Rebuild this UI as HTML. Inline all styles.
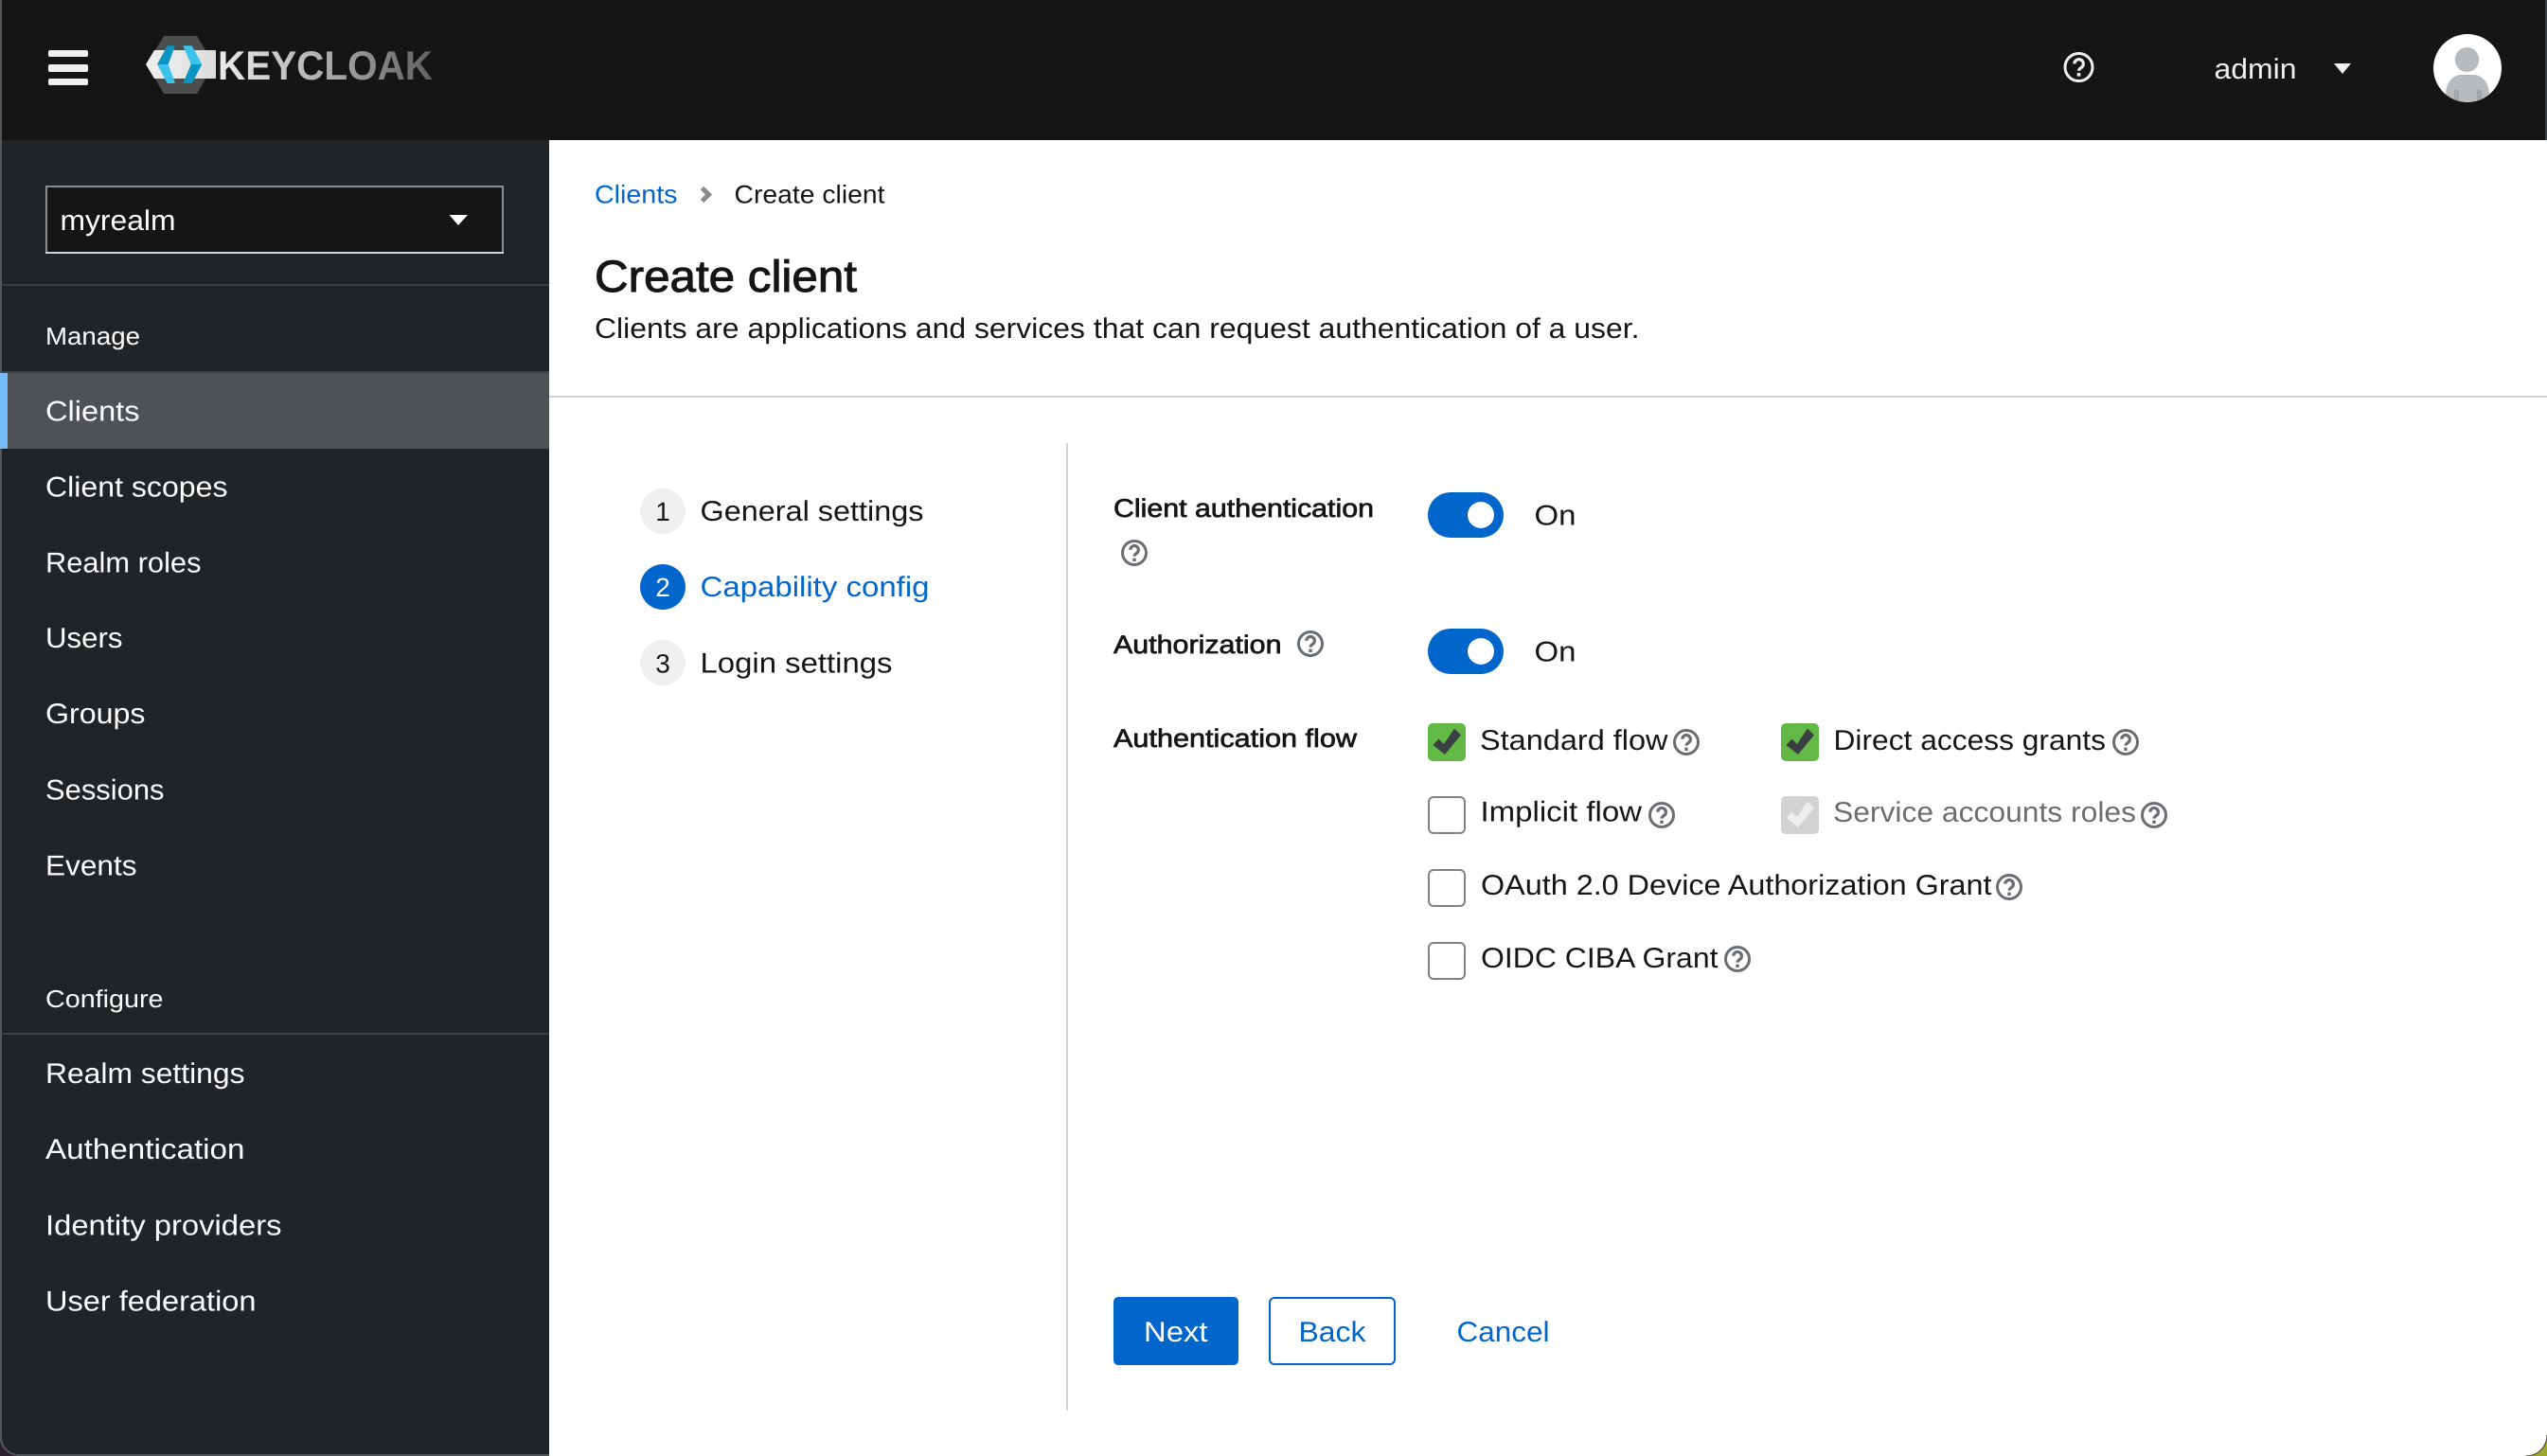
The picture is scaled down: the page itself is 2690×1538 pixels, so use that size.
<!DOCTYPE html>
<html lang="en"><head><meta charset="utf-8"><title>Keycloak - Create client</title>
<style>
html,body{margin:0;padding:0;background:#fff;width:2690px;height:1538px;overflow:hidden}
svg{display:block}
text{font-family:"Liberation Sans",sans-serif;font-size:30px;text-rendering:geometricPrecision}
.s{fill:#fff}.d{fill:#151515}.b{fill:#06c}
.m{stroke:#151515;stroke-width:.7px;fill:#151515;font-size:27px}
</style></head><body>
<svg width="2690" height="1538" viewBox="0 0 2690 1538" xmlns="http://www.w3.org/2000/svg">
<defs>
<linearGradient id="kg" gradientUnits="userSpaceOnUse" x1="230" y1="0" x2="457" y2="0"><stop offset="0" stop-color="#ececec"/><stop offset=".5" stop-color="#adadad"/><stop offset="1" stop-color="#5f5f5f"/></linearGradient>
<linearGradient id="bg" gradientUnits="userSpaceOnUse" x1="154" y1="0" x2="228" y2="0"><stop offset="0" stop-color="#f0f0f0"/><stop offset="1" stop-color="#dcdcdc"/></linearGradient>
<g id="h"><circle r="12.5" fill="none" stroke="#6a6e73" stroke-width="3"/><path d="M-4.2,-3.2a4.3,4.3 0 1 1 6.6,3.6c-1.5,1-2.3,1.6-2.3,3.2" fill="none" stroke="#6a6e73" stroke-width="3.2"/><rect x="-1.7" y="5.6" width="3.4" height="3.4" fill="#6a6e73"/></g>
<g id="u"><rect x="1" y="1" width="38" height="38" rx="5" fill="#fff" stroke="#808285" stroke-width="2"/></g>
<path id="c" d="M5.5,23L11.5,16.5L17,22L28,5.5L35,12.5L18,33Z"/>
<clipPath id="av"><circle cx="2606" cy="72" r="36"/></clipPath>
</defs>

<rect width="2690" height="1538" fill="#fff"/>
<!-- header -->
<rect width="2690" height="148" fill="#151515"/>
<rect x="2688" width="2" height="148" fill="#3c3f42"/>
<!-- sidebar -->
<rect y="148" width="580" height="1390" fill="#212427"/>
<rect width="2" height="1538" fill="#54575a"/>

<!-- hamburger -->
<rect x="51" y="53" width="42" height="7" rx="2" fill="#f0f0f0"/>
<rect x="51" y="68" width="42" height="8" rx="2" fill="#f0f0f0"/>
<rect x="51" y="83" width="42" height="7" rx="2" fill="#f0f0f0"/>

<!-- logo -->
<polygon points="173,38 208,38 226,68 208,99 173,99 155,68" fill="#4d4d4d"/>
<polygon points="163,53 228,53 228,83 163,83 154,68" fill="url(#bg)"/>
<polygon points="166,68 176.7,48.3 185,48.3 177.7,68" fill="#0a94c2"/>
<polygon points="166,68 177.7,68 185,88 176.7,88" fill="#39c4ee"/>
<polygon points="213.3,68 202.7,48.3 193.3,48.3 201.7,68" fill="#39c4ee"/>
<polygon points="213.3,68 201.7,68 193.3,88 202.7,88" fill="#0a94c2"/>
<text x="230" y="84" textLength="227" lengthAdjust="spacingAndGlyphs" style="font-size:43px;font-weight:700" fill="url(#kg)">KEYCLOAK</text>

<!-- header right -->
<g transform="translate(2195.5,71)"><circle r="14.5" fill="none" stroke="#f0f0f0" stroke-width="3"/><path d="M-4.6,-3.6a4.7,4.7 0 1 1 7.2,4c-1.6,1-2.5,1.8-2.5,3.4" fill="none" stroke="#f0f0f0" stroke-width="3.2"/><rect x="-1.8" y="6" width="3.6" height="3.6" fill="#f0f0f0"/></g>
<text x="2338.5" y="83" textLength="87" lengthAdjust="spacingAndGlyphs" fill="#f0f0f0">admin</text>
<polygon points="2465,67 2483,67 2474,78" fill="#f0f0f0"/>
<circle cx="2606" cy="72" r="36" fill="#fff"/>
<g clip-path="url(#av)">
<ellipse cx="2605.5" cy="63" rx="12.8" ry="13" fill="#b8bbbe"/>
<path d="M2599,52a13,13 0 0 0 0,22a13,13 0 0 1 0,-22Z" fill="#a3a5a8"/>
<path d="M2583,110V100c0,-13 8,-21 16,-21h14c8,0 16,8 16,21v10Z" fill="#b8bbbe"/>
<rect x="2592" y="95" width="5" height="15" fill="#a3a5a8"/>
<rect x="2616" y="95" width="5" height="15" fill="#a3a5a8"/>
</g>

<!-- realm selector -->
<rect x="49" y="197" width="482" height="70" fill="#151515" stroke="#8a8d90" stroke-width="2"/>
<rect x="48" y="266" width="484" height="2" fill="#d2d2d2"/>
<text class="s" x="63.5" y="243" textLength="122" lengthAdjust="spacingAndGlyphs">myrealm</text>
<polygon points="474.5,227 494,227 484,238" fill="#fff"/>
<rect x="2" y="300" width="578" height="2" fill="#3c3f42"/>

<!-- nav -->
<text class="s" x="48" y="364" textLength="100" lengthAdjust="spacingAndGlyphs" style="font-size:26px">Manage</text>
<rect x="2" y="392" width="578" height="2" fill="#3c3f42"/>
<rect x="2" y="394" width="578" height="80" fill="#4f5255"/>
<rect x="0" y="394" width="8" height="80" fill="#73bcf7"/>
<text class="s" x="48" y="444.5" textLength="99.5" lengthAdjust="spacingAndGlyphs">Clients</text>
<text class="s" x="48" y="524.5" textLength="192.5" lengthAdjust="spacingAndGlyphs">Client scopes</text>
<text class="s" x="48" y="604.5" textLength="164.5" lengthAdjust="spacingAndGlyphs">Realm roles</text>
<text class="s" x="48" y="684" textLength="81.5" lengthAdjust="spacingAndGlyphs">Users</text>
<text class="s" x="48" y="764" textLength="105.5" lengthAdjust="spacingAndGlyphs">Groups</text>
<text class="s" x="48" y="844.5" textLength="125.5" lengthAdjust="spacingAndGlyphs">Sessions</text>
<text class="s" x="48" y="924.5" textLength="96.5" lengthAdjust="spacingAndGlyphs">Events</text>
<text class="s" x="48" y="1064" textLength="124.5" lengthAdjust="spacingAndGlyphs" style="font-size:26px">Configure</text>
<rect x="2" y="1091" width="578" height="2" fill="#3c3f42"/>
<text class="s" x="48" y="1144" textLength="210.5" lengthAdjust="spacingAndGlyphs">Realm settings</text>
<text class="s" x="48" y="1224" textLength="210.5" lengthAdjust="spacingAndGlyphs">Authentication</text>
<text class="s" x="48" y="1304.5" textLength="249.5" lengthAdjust="spacingAndGlyphs">Identity providers</text>
<text class="s" x="48" y="1384.5" textLength="222.5" lengthAdjust="spacingAndGlyphs">User federation</text>

<!-- breadcrumb + title -->
<text class="b" x="628" y="214.5" textLength="87.5" lengthAdjust="spacingAndGlyphs" style="font-size:27px">Clients</text>
<path d="M741.5,198.5L748.5,205.5L741.5,212.5" fill="none" stroke="#8a8d90" stroke-width="5"/>
<text class="d" x="775.5" y="214.5" textLength="159" lengthAdjust="spacingAndGlyphs" style="font-size:27px">Create client</text>
<text x="628" y="308" textLength="277" lengthAdjust="spacingAndGlyphs" style="font-size:47px;stroke:#151515;stroke-width:1px" fill="#151515">Create client</text>
<text class="d" x="628" y="357" textLength="1103.5" lengthAdjust="spacingAndGlyphs">Clients are applications and services that can request authentication of a user.</text>
<rect x="580" y="418" width="2110" height="2" fill="#d2d2d2"/>
<rect x="1126" y="468" width="2" height="1022" fill="#d2d2d2"/>

<!-- wizard -->
<circle cx="700" cy="540" r="24" fill="#f0f0f0"/>
<text class="d" x="700" y="550" text-anchor="middle" style="font-size:28px">1</text>
<text class="d" x="739.5" y="550" textLength="236" lengthAdjust="spacingAndGlyphs">General settings</text>
<circle cx="700" cy="620" r="24" fill="#06c"/>
<text class="s" x="700" y="630" text-anchor="middle" style="font-size:28px">2</text>
<text class="b" x="739.5" y="630" textLength="242" lengthAdjust="spacingAndGlyphs">Capability config</text>
<circle cx="700" cy="700" r="24" fill="#f0f0f0"/>
<text class="d" x="700" y="710.5" text-anchor="middle" style="font-size:28px">3</text>
<text class="d" x="739.5" y="710.5" textLength="203" lengthAdjust="spacingAndGlyphs">Login settings</text>

<!-- client auth -->
<text class="m" x="1176" y="546" textLength="275" lengthAdjust="spacingAndGlyphs">Client authentication</text>
<use href="#h" x="1198" y="584"/>
<rect x="1508" y="520" width="80" height="48" rx="24" fill="#06c"/>
<circle cx="1564" cy="544" r="14" fill="#fff"/>
<text class="d" x="1620.5" y="554.5" textLength="44" lengthAdjust="spacingAndGlyphs">On</text>

<text class="m" x="1176" y="690" textLength="177.5" lengthAdjust="spacingAndGlyphs">Authorization</text>
<use href="#h" x="1384" y="680"/>
<rect x="1508" y="664" width="80" height="48" rx="24" fill="#06c"/>
<circle cx="1564" cy="688" r="14" fill="#fff"/>
<text class="d" x="1620.5" y="698.5" textLength="44" lengthAdjust="spacingAndGlyphs">On</text>

<text class="m" x="1176" y="789" textLength="257" lengthAdjust="spacingAndGlyphs">Authentication flow</text>

<!-- checks -->
<rect x="1508" y="764" width="40" height="40" rx="5" fill="#63b946"/>
<use href="#c" x="1508" y="764" fill="#3c3f42"/>
<text class="d" x="1563" y="792" textLength="198.5" lengthAdjust="spacingAndGlyphs">Standard flow</text>
<use href="#h" x="1781" y="784"/>

<rect x="1881" y="764" width="40" height="40" rx="5" fill="#63b946"/>
<use href="#c" x="1881" y="764" fill="#3c3f42"/>
<text class="d" x="1936.5" y="792" textLength="287.5" lengthAdjust="spacingAndGlyphs">Direct access grants</text>
<use href="#h" x="2245" y="784"/>

<use href="#u" x="1508" y="841"/>
<text class="d" x="1563.5" y="867.5" textLength="170.5" lengthAdjust="spacingAndGlyphs">Implicit flow</text>
<use href="#h" x="1755" y="861"/>

<rect x="1881" y="841" width="40" height="40" rx="5" fill="#d2d2d2"/>
<use href="#c" x="1881" y="841" fill="#ededed"/>
<text x="1936" y="868" textLength="320" lengthAdjust="spacingAndGlyphs" fill="#6a6e73">Service accounts roles</text>
<use href="#h" x="2275" y="861"/>

<use href="#u" x="1508" y="918"/>
<text class="d" x="1564" y="945" textLength="539.5" lengthAdjust="spacingAndGlyphs">OAuth 2.0 Device Authorization Grant</text>
<use href="#h" x="2122" y="937"/>

<use href="#u" x="1508" y="995"/>
<text class="d" x="1564" y="1022" textLength="250.5" lengthAdjust="spacingAndGlyphs">OIDC CIBA Grant</text>
<use href="#h" x="1835" y="1013"/>

<!-- buttons -->
<rect x="1176" y="1370" width="132" height="72" rx="5" fill="#06c"/>
<text class="s" x="1208" y="1417" textLength="67.5" lengthAdjust="spacingAndGlyphs">Next</text>
<rect x="1341" y="1371" width="132" height="70" rx="5" fill="#fff" stroke="#06c" stroke-width="2"/>
<text class="b" x="1371.5" y="1417" textLength="71" lengthAdjust="spacingAndGlyphs">Back</text>
<text class="b" x="1538.5" y="1417" textLength="98" lengthAdjust="spacingAndGlyphs">Cancel</text>

<!-- window corners -->
<rect x="0" y="1536" width="580" height="2" fill="#4f5255"/>
<path d="M0,1518A20,20 0 0 0 20,1538H0Z" fill="#2a2230"/>
<path d="M1,1518A19,19 0 0 0 20,1537" fill="none" stroke="#54575a" stroke-width="2"/>
<path d="M2690,1516A22,22 0 0 1 2668,1538H2690Z" fill="#9ca82a"/>
<path d="M2690,1516A22,22 0 0 1 2668,1538" fill="none" stroke="#3a3a2a" stroke-width="1"/>
</svg>
</body></html>
